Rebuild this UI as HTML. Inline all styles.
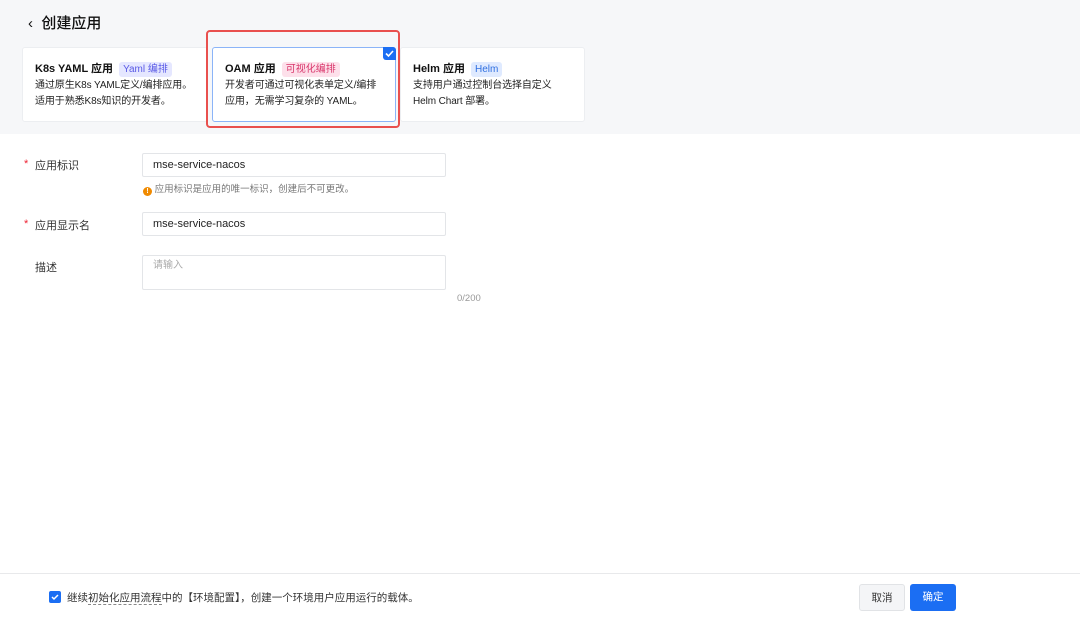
<!DOCTYPE html>
<html><head><meta charset="utf-8"><style>
*{box-sizing:border-box;margin:0;padding:0}
body{width:1080px;height:620px;background:#fff;font-family:"Liberation Sans","Noto Sans CJK SC",sans-serif;color:#333;position:relative;overflow:hidden;font-size:12px}
.top{position:absolute;left:0;top:0;width:1080px;height:134px;background:#f6f7f9}
.title{position:absolute;left:28px;top:12px;font-size:15px;color:#111;font-weight:500}
.card{position:absolute;top:47px;height:75px;background:#fff;border:1px solid #eceef1;border-radius:3px;padding:13px 12px;white-space:nowrap}
.card h4{font-size:11px;font-weight:bold;color:#111;line-height:16px;margin-bottom:1px}
.card p{font-size:10px;line-height:16px;color:#222;letter-spacing:-0.1px}
.tag{display:inline-block;font-weight:normal;font-size:10px;padding:0 4px;line-height:15px;border-radius:3px;margin-left:6px}
.red{position:absolute;left:206px;top:30px;width:194px;height:98px;border:2px solid #e9504e;border-radius:4px}
.lbl{position:absolute;left:35px;font-size:11px;color:#333}
.star{position:absolute;left:24px;color:#e23;font-size:11px}
.inp{position:absolute;left:142px;width:304px;height:24px;border:1px solid #e3e5e8;border-radius:2px;padding:0 10px;font-size:11px;line-height:22px;color:#222}
.foot{position:absolute;left:0;top:573px;width:1080px;height:47px;border-top:1px solid #e8e9eb}
.btn{position:absolute;top:584px;height:27px;border-radius:3px;font-size:10.5px;line-height:27px;text-align:center}
</style></head><body>
<div class="top"></div>
<div class="title">‹&nbsp; 创建应用</div>
<div class="card" style="left:22px;width:186px"><h4>K8s YAML 应用<span class="tag" style="background:#e5e7ff;color:#5a5ae6">Yaml 编排</span></h4><p>通过原生K8s YAML定义/编排应用。<br>适用于熟悉K8s知识的开发者。</p></div>
<div class="card" style="left:212px;width:184px;border-color:#8bb4f8"><h4>OAM 应用<span class="tag" style="background:#fde0ea;color:#d9366b">可视化编排</span></h4><p>开发者可通过可视化表单定义/编排<br>应用，无需学习复杂的 YAML。</p>
<div style="position:absolute;right:-1px;top:-1px;width:13px;height:13px;background:#1b6ef3;border-radius:0 3px 0 3px"><svg width="13" height="13" viewBox="0 0 13 13"><path d="M3 6.5l2.5 2.5 4.5-5" stroke="#fff" stroke-width="1.6" fill="none"/></svg></div></div>
<div class="card" style="left:400px;width:185px"><h4>Helm 应用<span class="tag" style="background:#dfeaff;color:#2f6fe0">Helm</span></h4><p>支持用户通过控制台选择自定义<br>Helm Chart 部署。</p></div>
<div class="red"></div>

<span class="star" style="top:158px">*</span><span class="lbl" style="top:157px">应用标识</span>
<div class="inp" style="top:153px">mse-service-nacos</div>
<div style="position:absolute;left:143px;top:181px;font-size:9.5px;color:#777"><span style="display:inline-block;width:9px;height:9px;border-radius:50%;background:#f08a00;color:#fff;font-size:7px;line-height:9px;text-align:center;vertical-align:-1px;font-weight:bold">!</span> 应用标识是应用的唯一标识，创建后不可更改。</div>
<span class="star" style="top:218px">*</span><span class="lbl" style="top:217px">应用显示名</span>
<div class="inp" style="top:212px">mse-service-nacos</div>
<span class="lbl" style="top:259px">描述</span>
<div class="inp" style="top:255px;height:35px;color:#aaa;font-size:10px;line-height:20px">请输入</div>
<div style="position:absolute;left:457px;top:293px;font-size:9.5px;color:#999">0/200</div>

<div class="foot"></div>
<div style="position:absolute;left:49px;top:591px;width:12px;height:12px;background:#1b6ef3;border-radius:2px"><svg width="12" height="12" viewBox="0 0 12 12"><path d="M3 6l2 2 4-4" stroke="#fff" stroke-width="1.5" fill="none"/></svg></div>
<div style="position:absolute;left:67px;top:590px;font-size:10.5px;color:#333">继续<span style="border-bottom:1px dashed #888">初始化应用流程</span>中的【环境配置】，创建一个环境用户应用运行的载体。</div>
<div class="btn" style="left:859px;width:46px;background:#f4f5f7;border:1px solid #e1e3e6;color:#333">取消</div>
<div class="btn" style="left:910px;width:46px;background:#1b6ef3;color:#fff">确定</div>
</body></html>
